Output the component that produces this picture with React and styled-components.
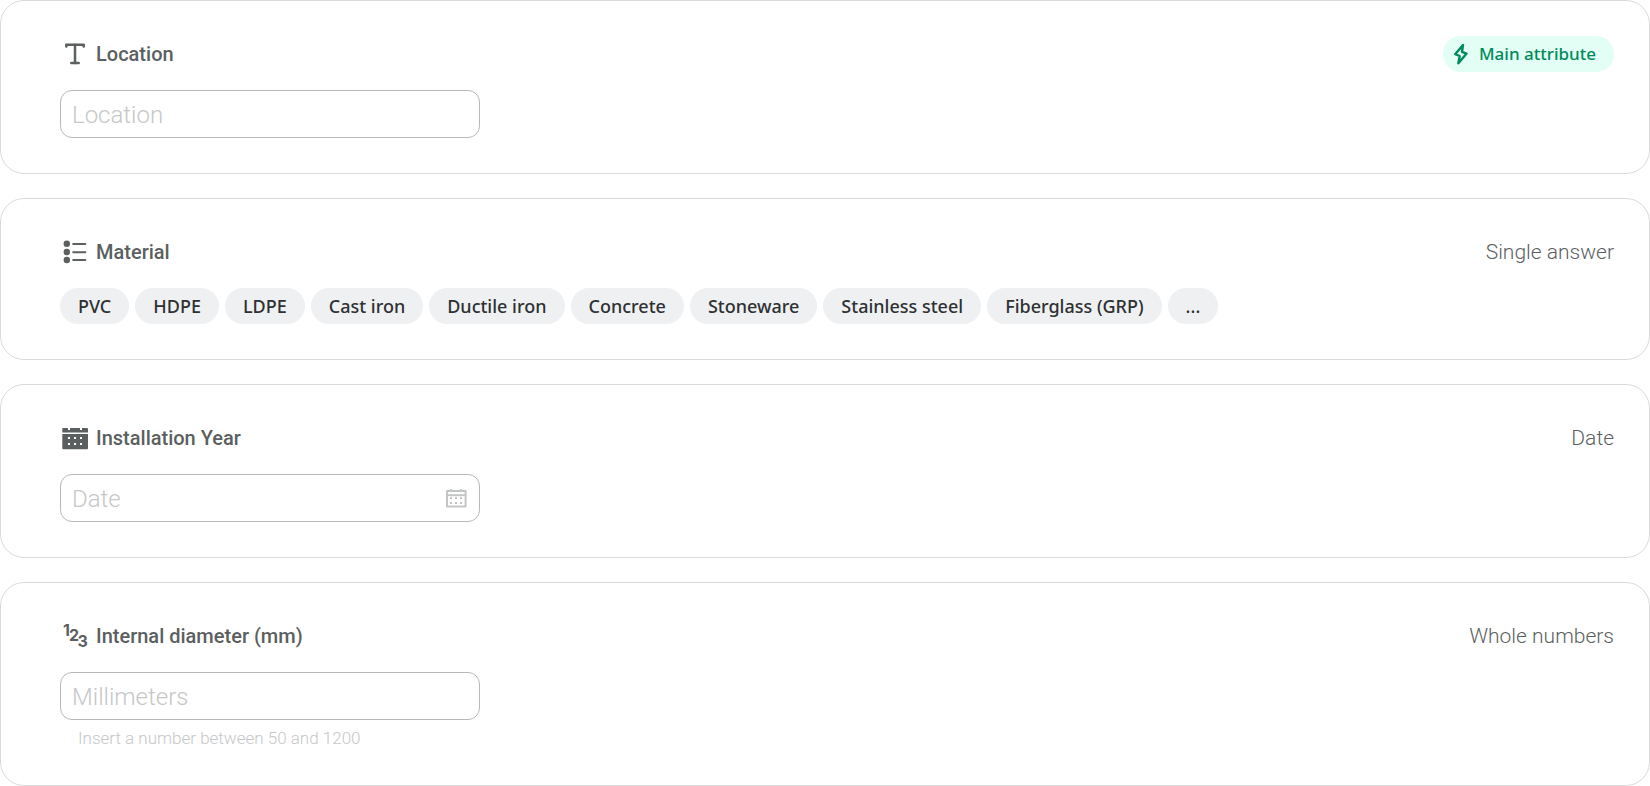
import React from 'react';
import styled, { createGlobalStyle } from 'styled-components';

const materials = [
  'PVC',
  'HDPE',
  'LDPE',
  'Cast iron',
  'Ductile iron',
  'Concrete',
  'Stoneware',
  'Stainless steel',
  'Fiberglass (GRP)',
  '...',
];

const TextIcon = () => (
  <TypeIcon viewBox="0 0 30 30" aria-hidden="true">
    <g fill="none" stroke="currentColor" strokeWidth="2.5" strokeLinecap="round" strokeLinejoin="round">
      <path d="M6.3 7.4V5.7H23.7V7.4" />
      <path d="M15 5.7V24" />
      <path d="M11.3 24H18.7" />
    </g>
  </TypeIcon>
);

const ListIcon = () => (
  <TypeIcon viewBox="0 0 30 30" aria-hidden="true">
    <g fill="currentColor">
      <circle cx="6.8" cy="6.8" r="3.2" />
      <circle cx="6.8" cy="15" r="3.2" />
      <circle cx="6.8" cy="23" r="3.2" />
    </g>
    <path
      d="M13.2 7H25.4M13.2 15.2H25.4M13.2 23H25.4"
      stroke="currentColor"
      strokeWidth="2"
      strokeLinecap="round"
    />
  </TypeIcon>
);

const CalendarIcon = () => (
  <TypeIcon viewBox="0 0 30 30" aria-hidden="true">
    <path
      fill="currentColor"
      d="M3 5H8V7H10V5H20V7H22V5H27Q28 5 28 6V9.4H2.3V6Q2.3 5 3 5Z"
    />
    <path fill="currentColor" d="M2.3 11H28V25.2Q28 26.2 27 26.2H3.3Q2.3 26.2 2.3 25.2Z" />
    <path fill="#fff" d="M8 14h2v2h-2zM14 14h2v2h-2zM20 14h2v2h-2zM8 20h2v2h-2zM14 20h2v2h-2zM20 20h2v2h-2z" />
  </TypeIcon>
);

const NumberIcon = () => (
  <TypeIcon viewBox="0 0 30 30" aria-hidden="true">
    <DigitText x="3" y="14.5">1</DigitText>
    <DigitText x="9" y="20.3">2</DigitText>
    <DigitText x="17.5" y="26.3">3</DigitText>
  </TypeIcon>
);

const BoltIcon = () => (
  <SmallIcon viewBox="0 0 24 24" aria-hidden="true">
    <path
      d="M14 2.9L6.2 12.2L10.7 14L9.4 21.3L17.6 11.6L13 9.8Z"
      fill="none"
      stroke="currentColor"
      strokeWidth="2.4"
      strokeLinejoin="round"
    />
  </SmallIcon>
);

const PickerIcon = () => (
  <SmallIcon viewBox="0 0 24 24" aria-hidden="true">
    <path d="M3 5H21.6V20.6H3Z" fill="none" stroke="currentColor" strokeWidth="2" strokeLinejoin="round" />
    <path d="M3 9.2H21.6" stroke="currentColor" strokeWidth="2" />
    <path d="M7 3V6M17 3V6" stroke="currentColor" strokeWidth="2" />
    <path
      fill="currentColor"
      d="M6 11h2v2H6zM11 11h2v2h-2zM16 11h2v2h-2zM6 16h2v2H6zM11 16h2v2h-2zM16 16h2v2h-2z"
    />
  </SmallIcon>
);

const App = () => {
  return (
    <>
      <GlobalStyle />
      <AttributeList>
        <AttributeCard>
          <CardHeader>
            <CardLabel htmlFor="location">
              <TextIcon />
              Location
            </CardLabel>
            <MainBadge>
              <BoltIcon />
              Main attribute
            </MainBadge>
          </CardHeader>
          <InputBox>
            <TextInput id="location" type="text" placeholder="Location" />
          </InputBox>
        </AttributeCard>

        <AttributeCard>
          <CardHeader>
            <CardTitle id="material">
              <ListIcon />
              Material
            </CardTitle>
            <AnswerType>Single answer</AnswerType>
          </CardHeader>
          <ChipList aria-labelledby="material">
            {materials.map((material) => (
              <Chip key={material}>{material}</Chip>
            ))}
          </ChipList>
        </AttributeCard>

        <AttributeCard>
          <CardHeader>
            <CardLabel htmlFor="installation-year">
              <CalendarIcon />
              Installation Year
            </CardLabel>
            <AnswerType>Date</AnswerType>
          </CardHeader>
          <InputBox>
            <TextInput id="installation-year" type="text" placeholder="Date" />
            <PickerButton type="button" aria-label="Open calendar">
              <PickerIcon />
            </PickerButton>
          </InputBox>
        </AttributeCard>

        <AttributeCard>
          <CardHeader>
            <CardLabel htmlFor="diameter">
              <NumberIcon />
              Internal diameter (mm)
            </CardLabel>
            <AnswerType>Whole numbers</AnswerType>
          </CardHeader>
          <InputBox>
            <TextInput
              id="diameter"
              type="text"
              inputMode="numeric"
              placeholder="Millimeters"
              aria-describedby="diameter-hint"
            />
          </InputBox>
          <Hint id="diameter-hint">Insert a number between 50 and 1200</Hint>
        </AttributeCard>
      </AttributeList>
    </>
  );
};

// Styled components
const GlobalStyle = createGlobalStyle`
  * {
    box-sizing: border-box;
  }

  body {
    margin: 0;
    background: #fff;
    color: #5b5f5f;
    font-family: Roboto, "Liberation Sans", sans-serif;
  }
`;

const AttributeList = styled.main`
  display: flex;
  flex-direction: column;
  gap: 24px;
`;

const AttributeCard = styled.section`
  padding: 35px 35px 35px 59px;
  border: 1px solid #dadada;
  border-radius: 24px;
  background: #fff;
`;

const CardHeader = styled.div`
  display: flex;
  align-items: center;
  justify-content: space-between;
  height: 36px;
  margin-bottom: 18px;
`;

const CardLabel = styled.label`
  display: flex;
  align-items: center;
  gap: 6px;
  font-size: 20px;
  font-weight: 500;
  line-height: 30px;
`;

const CardTitle = styled(CardLabel).attrs({ as: 'h2' })`
  margin: 0;
`;

const TypeIcon = styled.svg`
  flex: none;
  width: 30px;
  height: 30px;
`;

const SmallIcon = styled.svg`
  flex: none;
  display: block;
  width: 24px;
  height: 24px;
`;

const DigitText = styled.text`
  fill: currentColor;
  font-family: Inter, sans-serif;
  font-size: 16px;
  font-weight: 700;
`;

const AnswerType = styled.span`
  font-size: 21px;
  font-weight: 300;
  line-height: 30px;
`;

const MainBadge = styled.span`
  display: flex;
  align-items: center;
  gap: 6px;
  height: 36px;
  padding: 0 18px 0 6px;
  border-radius: 18px;
  background: #e3fef4;
  color: #008a5b;
  font-family: "Noto Sans", sans-serif;
  font-size: 17px;
  font-weight: 500;
  line-height: 34px;
`;

const ChipList = styled.ul`
  display: flex;
  flex-wrap: wrap;
  gap: 6px;
  margin: 0;
  padding: 0;
  list-style: none;
`;

const Chip = styled.li`
  padding: 0 18px;
  border-radius: 18px;
  background: #eff0f2;
  color: #2e3133;
  font-family: "Noto Sans", sans-serif;
  font-size: 18px;
  font-weight: 500;
  line-height: 36px;
`;

const InputBox = styled.div`
  display: flex;
  align-items: center;
  width: 420px;
  max-width: 100%;
  height: 48px;
  padding: 0 11px;
  border: 1px solid #b8b8b8;
  border-radius: 12px;
`;

const TextInput = styled.input`
  flex: 1;
  min-width: 0;
  height: 100%;
  padding: 2px 0 0;
  border: 0;
  outline: 0;
  background: transparent;
  color: #5b5f5f;
  font-family: inherit;
  font-size: 24px;
  font-weight: 300;

  &::placeholder {
    color: #c6c7c7;
    opacity: 1;
  }
`;

const PickerButton = styled.button`
  padding: 0;
  border: 0;
  background: transparent;
  color: #c4c6c6;
  cursor: pointer;
`;

const Hint = styled.p`
  margin: 6px 0 0 18px;
  color: #c6c7c7;
  font-size: 17px;
  font-weight: 300;
  line-height: 24px;
`;

export default App;
